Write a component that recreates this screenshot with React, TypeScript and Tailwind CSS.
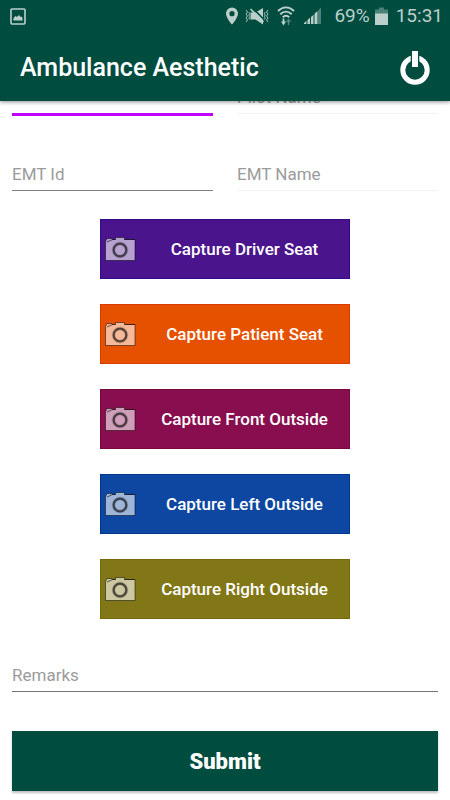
import { useState } from "react";

interface CaptureItem {
    label: string;
    style: string;
}

const CAPTURES: CaptureItem[] = [
    { label: "Capture Driver Seat", style: "bg-[#4a148c] border-[#32098a]" },
    { label: "Capture Patient Seat", style: "bg-[#e65100] border-[#dd3a00]" },
    { label: "Capture Front Outside", style: "bg-[#880e4f] border-[#7a0838]" },
    { label: "Capture Left Outside", style: "bg-[#0d47a1] border-[#063590]" },
    { label: "Capture Right Outside", style: "bg-[#827717] border-[#746a0c]" },
];

function StatusBar() {
    return (
        <div className="flex h-8 items-center justify-between pl-[10px] pr-[7px] text-[#bbd0cc]">
            <svg width="16" height="17" viewBox="0 0 16 17" fill="none">
                <rect x="1" y="1" width="14" height="15" rx="1" stroke="currentColor" strokeWidth="1.6" />
                <path d="M3.5 12.5V10l2-2 1.5 1 2-2 1.5 2 1-.5 1 1.500v2.500z" fill="currentColor" />
            </svg>
            <div className="flex items-center">
                <svg width="14" height="18" viewBox="0 0 14 18" fill="currentColor">
                    <path fillRule="evenodd" d="M7 .5a6 6 0 0 0-6 6C1 11 7 17.500 7 17.500S13 11 13 6.500a6 6 0 0 0-6-6zm0 3.600a2.600 2.600 0 1 1 0 5.200 2.600 2.600 0 0 1 0-5.200z" />
                </svg>
                <svg className="ml-[6px]" width="24" height="18" viewBox="0 0 24 18" fill="none">
                    <path d="M5.500 5.500h5L18 1v16.500l-7.500-5h-5z" fill="currentColor" />
                    <path d="M7.500 1L20 13.500" stroke="#004d40" strokeWidth="1.600" />
                    <path d="M5.500 2L18.500 15" stroke="currentColor" strokeWidth="1.600" />
                    <path d="M1 3l1.500 2L1 7l1.500 2L1 11l1.500 2L1 15M3.800 5l.8 1.500-.8 1.500.8 1.500-.8 1.500.8 1.500M23 3l-1.500 2L23 7l-1.500 2L23 11l-1.500 2L23 15M20.200 5l-.8 1.500.8 1.500-.8 1.500.8 1.500-.8 1.500" stroke="currentColor" strokeWidth="0.900" />
                </svg>
                <svg className="ml-2" width="18" height="20" viewBox="0 0 18 20" fill="none">
                    <path d="M1 5c5-4.700 11-4.700 16 0M3.300 8.200c3.500-3.400 7.900-3.400 11.400 0M5.800 11.300c2-2.100 4.400-2.100 6.400 0" stroke="currentColor" strokeWidth="2" />
                    <path d="M6.500 12.500v4" stroke="currentColor" strokeWidth="1.800" />
                    <path d="M4 15.500h5l-2.500 4z" fill="currentColor" />
                    <path d="M11.500 19v-5M9.500 16l2-2.500 2 2.500" stroke="currentColor" strokeOpacity="0.5" strokeWidth="1.200" />
                </svg>
                <svg className="ml-[9px]" width="18" height="18" viewBox="0 0 18 18" fill="currentColor">
                    <path d="M0 17v-1l2.500-2.100V17zM3.500 17v-4L6 10.800V17zM7 17v-7L9.500 7.800V17zM10.500 17V6.700L13.500 4v13z" />
                    <path d="M14 17V3.500L17 .5V17z" opacity="0.4" />
                </svg>
                <span className="ml-3 text-[19px]">69%</span>
                <svg className="ml-[5px]" width="13" height="18" viewBox="0 0 13 18" fill="currentColor">
                    <path d="M0 2.500h4V.5h5v2h4V7H0z" opacity="0.4" />
                    <path d="M0 6.500h13V18H0z" />
                </svg>
                <span className="ml-2 text-[19px]">15:31</span>
            </div>
        </div>
    );
}

function CameraIcon() {
    return (
        <svg className="shrink-0" width="31" height="26" viewBox="0 0 31 26" fill="none">
            <path
                d="M.5 5.500L2 2.500h5l.5 1h3V1.500h9v2h10.500v21H.5z"
                fill="#fff"
                fillOpacity="0.6"
                stroke="#000"
                strokeOpacity="0.5"
                strokeWidth="1"
                strokeLinejoin="round"
            />
            <path d="M2 6l5.500-2.500h3M19.500 3.500H30" stroke="#000" strokeOpacity="0.5" strokeWidth="1.200" />
            <circle cx="15" cy="14" r="6.400" stroke="#000" strokeOpacity="0.12" strokeWidth="4" />
            <circle cx="15" cy="14" r="6.400" stroke="#000" strokeOpacity="0.6" strokeWidth="2.200" />
        </svg>
    );
}

function PowerIcon() {
    return (
        <svg width="30" height="34" viewBox="0 0 30 34" fill="none">
            <circle cx="15" cy="19" r="12.200" stroke="#fff" strokeWidth="5" />
            <path d="M15 0v17" stroke="#004d40" strokeWidth="8.600" />
            <path d="M15 0v16" stroke="#fff" strokeWidth="6" />
        </svg>
    );
}

function Field({ label, placeholder, line }: { label: string; placeholder?: string; line: string }) {
    const [value, setValue] = useState("");

    return (
        <input
            type="text"
            aria-label={label}
            placeholder={placeholder}
            value={value}
            onChange={(e) => setValue(e.target.value)}
            className={`block w-full min-w-0 bg-transparent text-[17px] leading-8 text-gray-800 outline-none placeholder:text-[#9b9b9b] ${line}`}
        />
    );
}

export default function App() {
    return (
        <div className="min-h-screen bg-white font-['Roboto',sans-serif]">
            <header className="sticky top-0 z-10 bg-[#004d40] shadow-[0_1px_4px_rgba(0,0,0,0.45)]">
                <StatusBar />
                <div className="flex h-[69px] items-center justify-between px-5 pt-[2px]">
                    <h1 className="text-[25px] font-medium text-white">Ambulance Aesthetic</h1>
                    <button type="button" aria-label="Log out">
                        <PowerIcon />
                    </button>
                </div>
            </header>

            <form className="-mt-5 px-3 pb-2" onSubmit={(e) => e.preventDefault()}>
                <div className="grid grid-cols-2 items-start gap-x-6">
                    <Field label="Pilot Id" line="border-b-3 border-[#bf00ff]" />
                    <Field label="Pilot Name" placeholder="Pilot Name" line="border-b border-[#f3f3f3]" />
                </div>
                <div className="mt-[42px] grid grid-cols-2 items-start gap-x-6">
                    <Field label="EMT Id" placeholder="EMT Id" line="border-b border-[#808080]" />
                    <Field label="EMT Name" placeholder="EMT Name" line="border-b border-[#f3f3f3]" />
                </div>

                <div className="mt-7 flex flex-col items-center gap-[25px]">
                    {CAPTURES.map((item) => (
                        <button
                            key={item.label}
                            type="button"
                            className={`flex h-[60px] w-[250px] items-center border pl-1 text-[17px] font-medium text-white ${item.style}`}
                        >
                            <CameraIcon />
                            <span className="flex-1 pl-1 pt-[2px]">{item.label}</span>
                        </button>
                    ))}
                </div>

                <div className="mt-10">
                    <Field label="Remarks" placeholder="Remarks" line="border-b border-[#757575]" />
                </div>

                <button
                    type="submit"
                    className="mt-[39px] block h-[60px] w-full bg-[#004d40] text-[22px] font-black text-white shadow-[0_2px_2px_rgba(0,0,0,0.25)]"
                >
                    Submit
                </button>
            </form>
        </div>
    );
}
